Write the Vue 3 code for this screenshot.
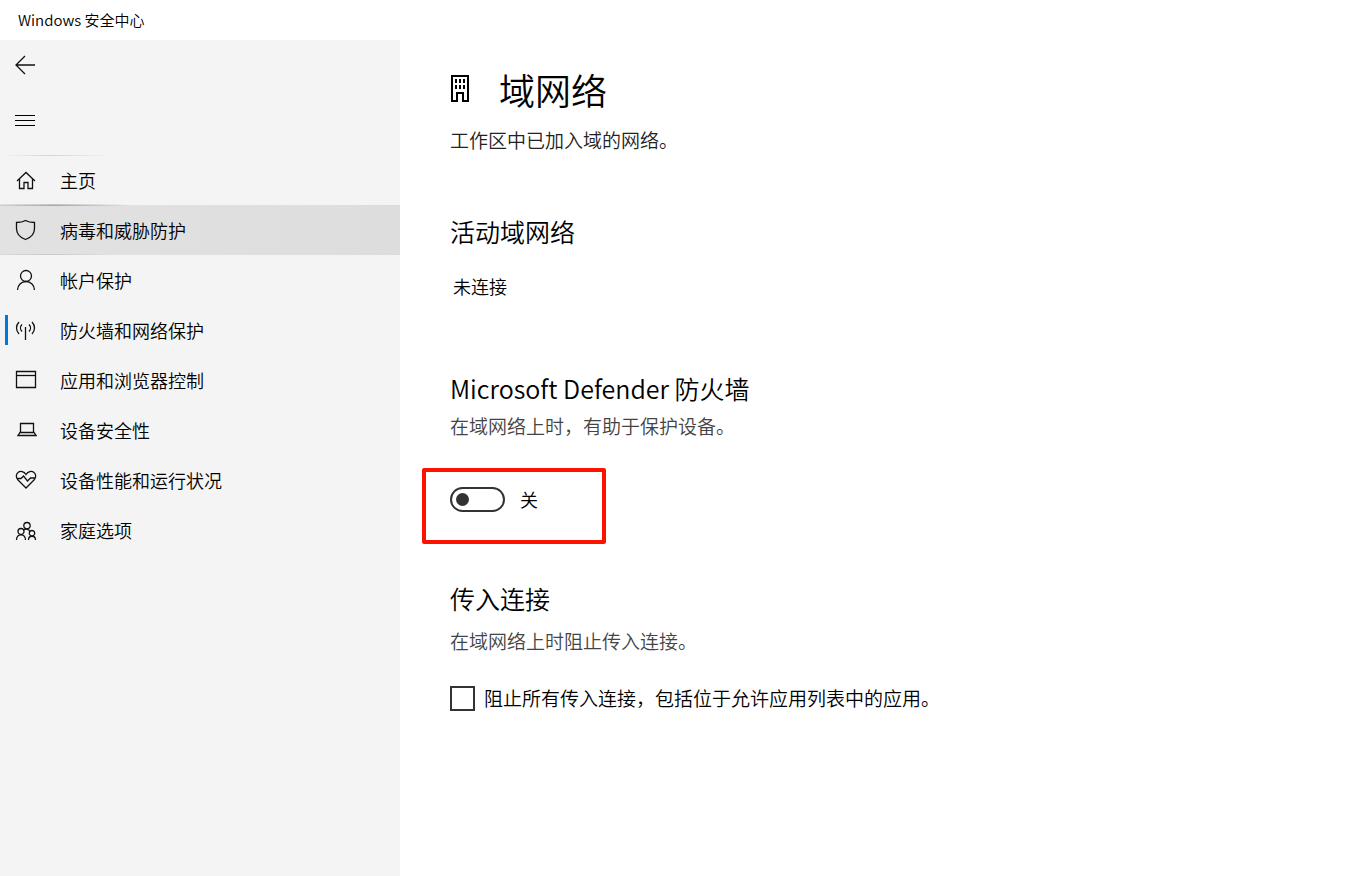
<template>
  <div class="window">
    <header class="title-bar">Windows 安全中心</header>

    <div class="body">
      <aside class="sidebar">
        <button class="icon-btn" type="button" aria-label="返回">
          <svg width="22" height="22" viewBox="0 0 22 22">
            <path d="M1 11h19M10 2L1 11l9 9" />
          </svg>
        </button>
        <button class="icon-btn" type="button" aria-label="菜单">
          <svg width="22" height="22" viewBox="0 0 22 22">
            <path class="crisp" d="M0 6.5h20M0 11.5h20M0 16.5h20" />
          </svg>
        </button>

        <nav class="nav">
          <a
            v-for="item in navItems"
            :key="item.key"
            href="#"
            class="nav-item"
            :class="[item.key, { current: item.key === current }]"
            @click.prevent="current = item.key"
          >
            <svg width="22" height="22" viewBox="0 0 22 22">
              <path v-for="d in item.paths" :key="d" :d="d" />
            </svg>
            <span>{{ item.label }}</span>
          </a>
        </nav>
      </aside>

      <main class="content">
        <div class="page-title">
          <svg width="20" height="32" viewBox="0 0 20 32">
            <path class="wall" d="M2 1h16v25h-5v-8h-6v8h-5z" />
            <path class="wall" d="M6 4v4M10 4v4M14 4v4M6 10v4M10 10v4M14 10v4" />
          </svg>
          <h1>域网络</h1>
        </div>
        <p class="intro">工作区中已加入域的网络。</p>

        <!-- 活动网络 -->
        <section class="active-network">
          <h2>活动域网络</h2>
          <p>未连接</p>
        </section>

        <!-- 防火墙开关 -->
        <section class="firewall">
          <h2>Microsoft Defender 防火墙</h2>
          <p class="desc">在域网络上时，有助于保护设备。</p>
          <div class="highlight">
            <input id="firewall" v-model="firewallOn" class="switch" type="checkbox" role="switch" />
            <label for="firewall">{{ firewallOn ? '开' : '关' }}</label>
          </div>
        </section>

        <!-- 传入连接 -->
        <section class="incoming">
          <h2>传入连接</h2>
          <p class="desc">在域网络上时阻止传入连接。</p>
          <div class="check-row">
            <input id="block-all" v-model="blockAll" class="check" type="checkbox" />
            <label for="block-all">阻止所有传入连接，包括位于允许应用列表中的应用。</label>
          </div>
        </section>
      </main>
    </div>
  </div>
</template>

<script setup>
import { ref } from 'vue'

const current = ref('network')
const firewallOn = ref(false)
const blockAll = ref(false)

// 侧边栏菜单
const navItems = [
  {
    key: 'home',
    label: '主页',
    paths: ['M2 12L11 3.5L20 12', 'M4.5 10v9.5h4.5v-6h4v6h4.5V10'],
  },
  {
    key: 'virus',
    label: '病毒和威胁防护',
    paths: ['M10.5 1.5C8 3 5 3.5 1.5 3.5V9.5C1.5 15 5 18.5 10.5 20.5C16 18.5 19.5 15 19.5 9.5V3.5C16 3.5 13 3 10.5 1.5z'],
  },
  {
    key: 'account',
    label: '帐户保护',
    paths: ['M11 1.5a5.5 5.5 0 1 1 0 11a5.5 5.5 0 1 1 0-11z', 'M2.5 21a8.5 8.5 0 0 1 17 0'],
  },
  {
    key: 'network',
    label: '防火墙和网络保护',
    paths: [
      'M10.5 8v13',
      'M4 3C.7 6.5.7 11.5 4 15',
      'M7 5.5C5 7.5 5 10.5 7 12.5',
      'M17 3c3.3 3.5 3.3 8.5 0 12',
      'M14 5.5c2 2 2 5 0 7',
    ],
  },
  {
    key: 'browser',
    label: '应用和浏览器控制',
    paths: ['M1.5 2.5h19v16h-19z', 'M1.5 6.5h19'],
  },
  {
    key: 'device',
    label: '设备安全性',
    paths: ['M5.5 13.5v-9h13v9', 'M5 13.5h14l2 3H3z'],
  },
  {
    key: 'health',
    label: '设备性能和运行状况',
    paths: [
      'M11 19L3 11C.5 8.5 1 5 3 3.5C5.5 1.5 9 2.5 11 5.5C13 2.5 16.5 1.5 19 3.5C21 5 21.5 8.5 19 11z',
      'M2 9.5h4l2.5-2.5l4 5l3-3H20',
    ],
  },
  {
    key: 'family',
    label: '家庭选项',
    paths: [
      'M12 3.5a3.2 3.2 0 1 1 0 6.4a3.2 3.2 0 1 1 0-6.4z',
      'M6 9.5a3 3 0 1 1 0 6a3 3 0 1 1 0-6z',
      'M17 11.5a2.7 2.7 0 1 1 0 5.4a2.7 2.7 0 1 1 0-5.4z',
      'M1.5 21c0-7 9-7 9 0',
      'M13.5 21c0-5 7-5 7 0',
      'M9 11c1-1.5 5-1.5 6 1.5',
    ],
  },
]
</script>

<style>
body {
  margin: 0;
}
</style>

<style scoped>
.window {
  display: flex;
  flex-direction: column;
  min-height: 100vh;
  background: #fff;
  color: #000;
  font-family: 'Noto Sans CJK SC', sans-serif;
  font-size: 18px;
  font-weight: 350;
  line-height: 28px;
}

h1,
h2,
p {
  margin: 0;
  font-weight: inherit;
}

svg {
  flex: none;
  fill: none;
  stroke: #111;
  stroke-width: 1.3;
}

.crisp {
  stroke-width: 1;
  stroke: #000;
}

.title-bar {
  height: 40px;
  padding: 0 18px;
  font-size: 15px;
  line-height: 40px;
}

.body {
  display: flex;
  flex: 1;
}

.sidebar {
  flex: 0 0 400px;
  background: #f4f4f4;
}

.icon-btn {
  display: flex;
  align-items: center;
  width: 50px;
  height: 50px;
  margin-bottom: 5px;
  padding: 0 0 0 15px;
  border: 0;
  background: none;
}

.nav {
  padding-top: 5px;
}

.nav-item {
  position: relative;
  display: flex;
  align-items: center;
  gap: 23px;
  height: 50px;
  padding-left: 15px;
  color: #000;
  text-decoration: none;
}

/* 当前项左侧的蓝色标记 */
.nav-item.current::before {
  content: '';
  position: absolute;
  left: 5px;
  top: 10px;
  width: 3px;
  height: 30px;
  background: #0078d7;
}

/* 指针附近的边缘光 */
.home {
  background:
    linear-gradient(90deg, #f4f4f4, #d4d4d4 50px, #f4f4f4 110px) top / 100% 1px no-repeat,
    linear-gradient(90deg, #e2e2e2, #c4c4c4 55px, #f4f4f4 130px) bottom / 100% 1px no-repeat;
}

.virus {
  background:
    linear-gradient(90deg, #d0d0d0, #a6a6a6 55px, transparent 130px) top / 100% 1px no-repeat,
    linear-gradient(90deg, #dadada, #c8c8c8 50px, transparent 110px) bottom / 100% 1px no-repeat,
    linear-gradient(90deg, #e2e2e2, #dddddd);
}

.content {
  flex: 1;
  padding: 29px 50px;
}

.page-title {
  display: flex;
  align-items: center;
  gap: 29px;
}

.page-title .wall {
  stroke: #000;
  stroke-width: 2;
}

h1 {
  padding-bottom: 4px;
  font-size: 36px;
  line-height: 40px;
}

h2 {
  font-size: 25px;
  line-height: 36px;
}

.intro {
  margin-top: 13px;
  color: #222;
  font-size: 19px;
}

.desc {
  color: #444;
  font-size: 19px;
}

.active-network {
  margin-top: 59px;
}

.active-network p {
  margin-top: 23px;
  padding-left: 3px;
}

.firewall {
  margin-top: 70px;
}

.firewall .desc {
  margin-top: 6px;
}

.highlight {
  display: flex;
  align-items: center;
  gap: 15px;
  box-sizing: border-box;
  width: 184px;
  height: 76px;
  margin: 28px 0 0 -28px;
  padding: 0 0 14px 24px;
  border: 4px solid #ff1100;
  border-radius: 2px;
}

.switch {
  appearance: none;
  display: flex;
  align-items: center;
  box-sizing: border-box;
  width: 55px;
  height: 25px;
  margin: 0;
  padding: 0 4px;
  border: 2px solid #333;
  border-radius: 13px;
}

.switch::before {
  content: '';
  width: 13px;
  height: 13px;
  border-radius: 50%;
  background: #333;
}

.switch:checked {
  justify-content: flex-end;
}

.incoming {
  margin-top: 36px;
}

.incoming .desc {
  margin-top: 11px;
}

.check-row {
  display: flex;
  align-items: center;
  gap: 9px;
  margin-top: 29px;
  font-size: 19px;
}

.check {
  appearance: none;
  flex: none;
  box-sizing: border-box;
  width: 25px;
  height: 25px;
  margin: 0;
  border: 2px solid #333;
}

.check:checked {
  background: #0078d7;
}
</style>
